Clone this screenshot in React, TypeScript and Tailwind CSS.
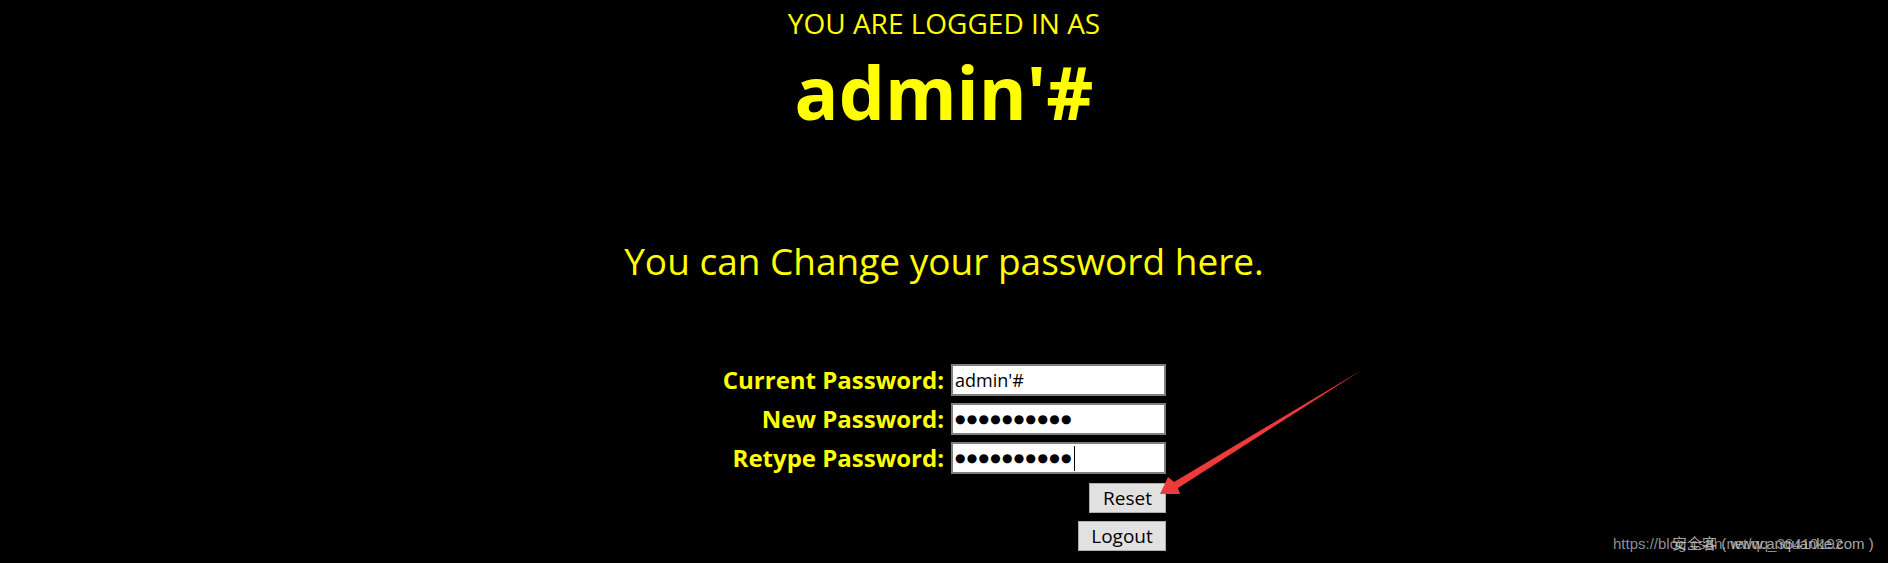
export default function App() {
  const rows = [
    { label: "Current Password:", value: "admin'#", secret: false, caret: false },
    { label: "New Password:", value: "●●●●●●●●●●", secret: true, caret: false },
    { label: "Retype Password:", value: "●●●●●●●●●●", secret: true, caret: true },
  ];

  return (
    <div className="relative h-[563px] w-[1888px] overflow-hidden bg-black font-['Open_Sans',sans-serif] text-[#ffff00]">
      <div className="flex flex-col items-center">
        <p className="mt-[9px] text-[28px] leading-[28px]">YOU ARE LOGGED IN AS</p>
        <h1 className="mt-[18px] text-[73px] font-bold leading-[73px]">admin'#</h1>
        <p className="mt-[113px] text-[37px] leading-[40px]">You can Change your password here.</p>

        <form className="mt-[83px] grid grid-cols-[222px_215px] gap-x-[7px] gap-y-[7px]">
          {rows.map((r) => (
            <div key={r.label} className="contents">
              <label className="flex items-center justify-end whitespace-nowrap text-[24px] font-bold leading-[32px]">
                {r.label}
              </label>
              <div
                role="textbox"
                className="flex h-[32px] items-center border-2 border-[#7f7f7f] bg-white pl-[2px] text-[18px] leading-[28px] text-black"
              >
                <span
                  className={
                    r.secret
                      ? "font-['DejaVu_Sans',sans-serif] text-[12px] tracking-[1.3px]"
                      : ""
                  }
                >
                  {r.value}
                </span>
                {r.caret && <span className="ml-[1px] inline-block h-[25px] w-px bg-black" />}
              </div>
            </div>
          ))}
          <div />
          <div className="flex justify-end pt-[2px]">
            <button
              type="button"
              className="h-[30px] w-[77px] border border-[#adadad] bg-[#e1e1e1] text-[19px] leading-[28px] text-black"
            >
              Reset
            </button>
          </div>
          <div />
          <div className="flex justify-end pt-[1px]">
            <button
              type="button"
              className="h-[30px] w-[88px] border border-[#adadad] bg-[#e1e1e1] text-[19px] leading-[28px] text-black"
            >
              Logout
            </button>
          </div>
        </form>
      </div>

      {/* red annotation arrow */}
      <svg
        className="pointer-events-none absolute left-0 top-0"
        width="1888"
        height="563"
        viewBox="0 0 1888 563"
      >
        <polygon
          points="1362,370 1178,488 1180,494 1160,494 1168,477 1174,482"
          fill="#ef3a3a"
        />
      </svg>

      {/* watermarks */}
      <span className="absolute left-[1613px] top-[535px] whitespace-nowrap font-['Liberation_Sans',sans-serif] text-[15px] leading-[18px] text-[#b4b4b4]/80">
        https://blog.csdn.net/qq_36410192
      </span>
      <span className="absolute left-[1672px] top-[535px] whitespace-nowrap font-['Liberation_Sans','Noto_Sans_CJK_SC',sans-serif] text-[15px] leading-[18px] text-[#d0d0d0]/80">
        安全客 ( www.anquanke.com )
      </span>
    </div>
  );
}
